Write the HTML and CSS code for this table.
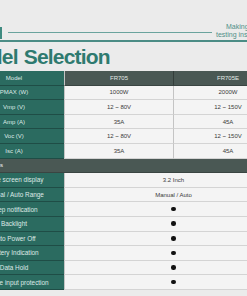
FILE: index.html
```html
<!DOCTYPE html>
<html>
<head>
<meta charset="utf-8">
<link rel="stylesheet" href="styles.css">
</head>
<body>
<div class="page">
  <header class="topbar">
    <span class="logo"></span>
    <span class="rule"></span>
    <div class="tagline"><span class="t1">Making</span><span class="t2">testing instruments</span></div>
  </header>
  <div class="thick"></div>
  <h1 class="title">Model Selection</h1>
  <div class="spec">
    <div class="row head"><div class="lab">Model</div><div class="val">FR705</div><div class="val">FR705E</div></div>
    <div class="row"><div class="lab">PMAX (W)</div><div class="val">1000W</div><div class="val">2000W</div></div>
    <div class="row"><div class="lab">Vmp (V)</div><div class="val">12 ~ 80V</div><div class="val">12 ~ 150V</div></div>
    <div class="row"><div class="lab">Amp (A)</div><div class="val">35A</div><div class="val">45A</div></div>
    <div class="row"><div class="lab">Voc (V)</div><div class="val">12 ~ 80V</div><div class="val">12 ~ 150V</div></div>
    <div class="row"><div class="lab">Isc (A)</div><div class="val">35A</div><div class="val">45A</div></div>
    <div class="row group"><div class="grp">Functions</div></div>
    <div class="row feat"><div class="lab">Large screen display</div><div class="val">3.2 Inch</div></div>
    <div class="row feat"><div class="lab">Manual / Auto Range</div><div class="val">Manual / Auto</div></div>
    <div class="row feat"><div class="lab">Beep notification</div><div class="val"><span class="dot"></span></div></div>
    <div class="row feat"><div class="lab">Backlight</div><div class="val"><span class="dot"></span></div></div>
    <div class="row feat"><div class="lab">Auto Power Off</div><div class="val"><span class="dot"></span></div></div>
    <div class="row feat"><div class="lab">Battery Indication</div><div class="val"><span class="dot"></span></div></div>
    <div class="row feat"><div class="lab">Data Hold</div><div class="val"><span class="dot"></span></div></div>
    <div class="row feat"><div class="lab">Reverse input protection</div><div class="val"><span class="dot"></span></div></div>
  </div>
</div>
</body>
</html>
```
FILE: styles.css
```css
html, body {
  margin: 0;
  padding: 0;
}
body {
  background: #ebebeb;
  width: 247px;
  height: 296px;
  overflow: hidden;
  font-family: "Liberation Sans", Arial, sans-serif;
}
.page {
  margin-left: -36px;
  width: 318px;
  padding-top: 24px;
}
.topbar {
  display: flex;
  align-items: center;
  height: 15px;
}
.logo {
  flex: none;
  width: 38px;
  height: 12px;
  margin-top: 2px;
  box-sizing: border-box;
  border-right: 2px solid #3f8a80;
}
.rule {
  flex: 1;
  height: 1px;
  margin: 2px 4px 0 6px;
  background: #6aa39d;
}
.tagline {
  flex: none;
  width: 66px;
  margin-top: -2px;
  display: flex;
  flex-direction: column;
  font-size: 7px;
  line-height: 7.5px;
  color: #4f8f88;
  white-space: nowrap;
}
.t1 {
  padding-left: 10px;
}
.thick {
  height: 2px;
  margin-top: 1px;
  background: #4b8c85;
}
.title {
  margin: 3px 0 0 -3px;
  font-size: 21px;
  line-height: 24px;
  font-weight: bold;
  color: #2e7a6f;
  letter-spacing: -0.8px;
  word-spacing: 1px;
  white-space: nowrap;
}
.spec {
  margin-top: 2px;
}
.row {
  display: grid;
  grid-template-columns: 100px 109px 109px;
  height: 14.6px;
  font-size: 6px;
  white-space: nowrap;
}
.lab, .val, .grp {
  box-sizing: border-box;
  display: flex;
  align-items: center;
  justify-content: center;
}
.lab {
  background: #2b6b60;
  color: #dfeae7;
  border-bottom: 1px solid #1f4d46;
}
.val {
  background: #f4f4f4;
  color: #3a3a3a;
  border-bottom: 1px solid #d4d4d4;
  border-left: 1px solid #c4c4c4;
}
.head .val {
  background: #4a5854;
  color: #e3e8e6;
  border-bottom-color: #3a4542;
}
.head .val + .val {
  border-left-color: #333d3a;
}
.group {
  grid-template-columns: 1fr;
  background: #4a5854;
}
.grp {
  justify-content: flex-start;
  padding-left: 13px;
  color: #f0f3f2;
  border-bottom: 1px solid #3a4542;
}
.feat {
  grid-template-columns: 100px 218px;
}
.feat .lab {
  font-size: 6.4px;
}
.dot {
  width: 4.5px;
  height: 4.5px;
  border-radius: 50%;
  background: #111;
}
```
